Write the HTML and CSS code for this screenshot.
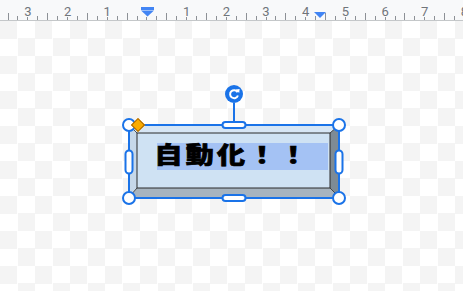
FILE: index.html
```html
<!DOCTYPE html>
<html lang="ja">
<head>
<meta charset="utf-8">
<title>自動化</title>
<link rel="stylesheet" href="styles.css">
</head>
<body>
<div class="ruler">
  <div class="ticks">
    <span class="c"></span><span class="c h"></span><span class="c"></span><span class="c n">3</span>
    <span class="c"></span><span class="c h"></span><span class="c"></span><span class="c n">2</span>
    <span class="c"></span><span class="c h"></span><span class="c"></span><span class="c n">1</span>
    <span class="c"></span><span class="c h"></span><span class="c"></span><span class="c n"></span>
    <span class="c"></span><span class="c h"></span><span class="c"></span><span class="c n">1</span>
    <span class="c"></span><span class="c h"></span><span class="c"></span><span class="c n">2</span>
    <span class="c"></span><span class="c h"></span><span class="c"></span><span class="c n">3</span>
    <span class="c"></span><span class="c h"></span><span class="c"></span><span class="c n">4</span>
    <span class="c"></span><span class="c h"></span><span class="c"></span><span class="c n">5</span>
    <span class="c"></span><span class="c h"></span><span class="c"></span><span class="c n">6</span>
    <span class="c"></span><span class="c h"></span><span class="c"></span><span class="c n">7</span>
    <span class="c"></span><span class="c h"></span><span class="c"></span><span class="c n">8</span>
  </div>
  <svg class="marker-left" width="13" height="10" viewBox="0 0 13 10"><rect x="0" y="0" width="13" height="3" fill="#4285f4"/><polygon points="0,3.5 13,3.5 6.5,9.5" fill="#4285f4"/></svg>
  <svg class="marker-right" width="12" height="6" viewBox="0 0 12 6"><polygon points="0,0 12,0 6,6" fill="#4285f4"/></svg>
</div>
<div class="canvas">
  <div class="shape">
    <svg class="bevel" width="210" height="72" viewBox="0 0 210 72">
      <polygon points="0,0 210,0 201,8 8,8" fill="#d7e6f4"/>
      <polygon points="0,0 8,8 8,63 0,72" fill="#c6d8e9"/>
      <polygon points="0,72 8,63 201,63 210,72" fill="#a7b4bf"/>
      <polygon points="210,0 210,72 201,63 201,8" fill="#7e8b95"/>
      <rect x="8" y="8" width="193" height="55" fill="#cfe2f3" stroke="#2b2b2b" stroke-width="1"/>
      <g stroke="#2b2b2b" stroke-width="0.8">
        <line x1="0.5" y1="0.5" x2="8" y2="8"/>
        <line x1="209.5" y1="0.5" x2="201" y2="8"/>
        <line x1="0.5" y1="71.5" x2="8" y2="63"/>
        <line x1="209.5" y1="71.5" x2="201" y2="63"/>
      </g>
    </svg>
    <div class="face">
      <div class="highlight"><span class="text">自動化！！</span></div>
    </div>
  </div>
  <div class="selection">
    <div class="rotate">
      <svg width="18" height="18" viewBox="0 0 18 18"><circle cx="9" cy="9" r="9" fill="#1a73e8"/><path d="M12.6 7.2A4 4 0 1 0 12.9 10.5" stroke="#fff" stroke-width="2" fill="none"/><polygon points="10.6,4.4 14.6,4 14.2,8" fill="#fff"/></svg>
      <span class="stem"></span>
    </div>
    <span class="hd corner tl"></span>
    <span class="hd corner tr"></span>
    <span class="hd corner bl"></span>
    <span class="hd corner br"></span>
    <span class="hd vpill ml"></span>
    <span class="hd vpill mr"></span>
    <span class="hd hpill tm"></span>
    <span class="hd hpill bm"></span>
    <span class="diamond"></span>
  </div>
</div>
</body>
</html>
```
FILE: styles.css
```css
html, body {
  margin: 0;
  padding: 0;
  background: #fff;
}
body {
  width: 463px;
  height: 291px;
  overflow: hidden;
}
.ruler {
  position: relative;
  height: 20px;
  background: #f8f9fa;
  border-bottom: 1px solid #c4c7c9;
  overflow: hidden;
}
.ticks {
  display: flex;
  align-items: flex-end;
  height: 20px;
  margin-left: -6.84px;
}
.c {
  flex: none;
  width: 9.925px;
  height: 20px;
  display: flex;
  flex-direction: column;
  align-items: center;
  justify-content: flex-end;
  font-family: Roboto, "Liberation Sans", sans-serif;
  font-size: 13px;
  line-height: 12px;
  color: #70757a;
}
.c::after {
  content: "";
  flex: none;
  width: 1px;
  height: 4px;
  background: #8d9196;
}
.c.h::after {
  height: 7px;
}
.c.n::after {
  height: 3px;
  margin-top: -1px;
}
.marker-left {
  position: absolute;
  left: 141px;
  top: 7px;
}
.marker-right {
  position: absolute;
  left: 314px;
  top: 12px;
}
.canvas {
  position: relative;
  height: 270px;
  background-color: #fff;
  background-image: conic-gradient(#fff 25%, #f4f4f4 0 50%, #fff 0 75%, #f4f4f4 0);
  background-size: 35px 35px;
}
.shape {
  position: absolute;
  left: 129px;
  top: 104px;
  width: 210px;
  height: 72px;
}
.bevel {
  position: absolute;
  left: 0;
  top: 0;
}
.face {
  position: relative;
  padding: 18px 0 0 28px;
}
.highlight {
  width: 171px;
  height: 27px;
  background: #a4c2f4;
  overflow: visible;
}
.text {
  display: inline-block;
  margin-left: -2.5px;
  font-family: "Noto Sans CJK JP", "Noto Sans CJK SC", sans-serif;
  font-weight: 900;
  font-size: 28px;
  line-height: 27px;
  letter-spacing: 3.2px;
  white-space: nowrap;
  color: #000;
  -webkit-text-stroke: 0.9px #000;
  transform: translateY(-3px) scaleY(0.8);
}
.selection {
  position: absolute;
  left: 128px;
  top: 103px;
  width: 212px;
  height: 75px;
  box-sizing: border-box;
  border: 2px solid #1a73e8;
}
.rotate {
  position: absolute;
  left: 50%;
  bottom: calc(100% + 4px);
  transform: translateX(-50%);
  display: flex;
  flex-direction: column;
  align-items: center;
}
.rotate svg {
  display: block;
}
.stem {
  width: 2px;
  height: 19px;
  background: #1a73e8;
}
.hd {
  position: absolute;
  box-sizing: border-box;
  background: #fff;
  border: 2px solid #1a73e8;
  transform: translate(-50%, -50%);
}
.corner {
  width: 14px;
  height: 14px;
  border-radius: 50%;
}
.vpill {
  width: 9px;
  height: 25px;
  border-radius: 5px;
}
.hpill {
  width: 25px;
  height: 8px;
  border-radius: 4px;
}
.tl { left: -1px; top: -1px; }
.tr { left: calc(100% + 1px); top: -1px; }
.bl { left: -1px; top: calc(100% + 1px); }
.br { left: calc(100% + 1px); top: calc(100% + 1px); }
.ml { left: -1px; top: 50%; }
.mr { left: calc(100% + 1px); top: 50%; }
.tm { left: 50%; top: -1px; }
.bm { left: 50%; top: calc(100% + 1px); }
.diamond {
  position: absolute;
  left: 8px;
  top: -1px;
  width: 10px;
  height: 10px;
  box-sizing: border-box;
  background: #f9ab00;
  border: 1px solid #a86400;
  transform: translate(-50%, -50%) rotate(45deg);
}
```
